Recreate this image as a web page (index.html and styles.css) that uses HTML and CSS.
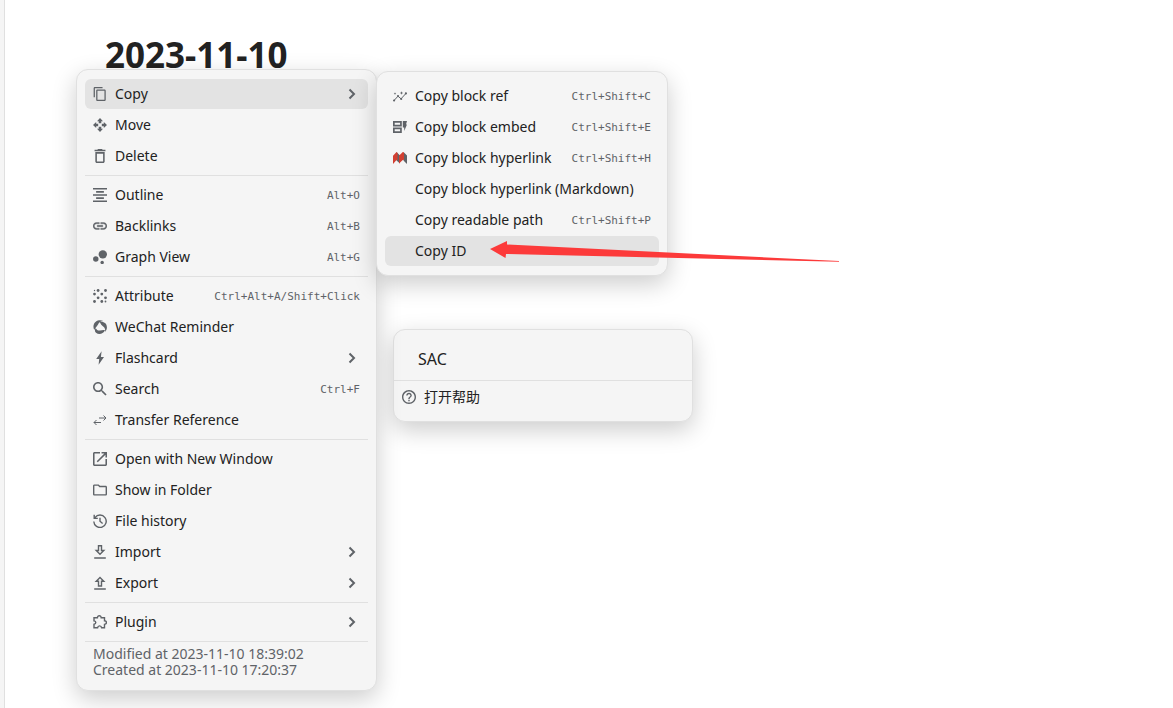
FILE: index.html
```html
<!DOCTYPE html>
<html lang="en">
<head>
<meta charset="utf-8">
<title>2023-11-10</title>
<link rel="stylesheet" href="styles.css">
</head>
<body>
<svg class="defs" aria-hidden="true">
  <symbol id="chevron" viewBox="0 0 16 16"><path d="M5.500 3.500 10 8l-4.500 4.500" fill="none" stroke="currentColor" stroke-width="2"/></symbol>
</svg>
<div class="app">
  <div class="dock"></div>
  <main class="editor"><h1 class="title">2023-11-10</h1></main>
</div>

<section class="menu menu-sac">
  <header class="menu-title">SAC</header>
  <button class="item"><svg class="icon" viewBox="2 2 20 20"><path d="M11 18h2v-2h-2v2zm1-16C6.480 2 2 6.480 2 12s4.480 10 10 10 10-4.480 10-10S17.520 2 12 2zm0 18c-4.410 0-8-3.590-8-8s3.590-8 8-8 8 3.590 8 8-3.590 8-8 8zm0-14c-2.210 0-4 1.790-4 4h2c0-1.100.9-2 2-2s2 .9 2 2c0 2-3 1.750-3 5h2c0-2.250 3-2.500 3-5 0-2.210-1.790-4-4-4z"/></svg><span class="label" lang="zh">打开帮助</span></button>
</section>

<nav class="menu menu-main">
  <button class="item current"><svg class="icon" viewBox="1 1 22 22"><path d="M16 1H4c-1.100 0-2 .9-2 2v14h2V3h12V1zm3 4H8c-1.100 0-2 .9-2 2v14c0 1.100.9 2 2 2h11c1.100 0 2-.9 2-2V7c0-1.100-.9-2-2-2zm0 16H8V7h11v14z"/></svg><span class="label">Copy</span><svg class="chevron"><use href="#chevron"/></svg></button>
  <button class="item"><svg class="icon" viewBox="0 0 14 14"><path d="M7 0l3 3.200H8.300v2H5.700v-2H4zM7 14l-3-3.200h1.700v-2h2.600v2H10zM0 7l3.200-3v1.700h2v2.600h-2V10zM14 7l-3.200 3V8.300h-2V5.700h2V4z"/></svg><span class="label">Move</span></button>
  <button class="item"><svg class="icon" viewBox="3 3 18 18"><path d="M16 9v10H8V9h8m-1.500-6h-5l-1 1H5v2h14V4h-3.500l-1-1zM18 7H6v12c0 1.100.9 2 2 2h8c1.100 0 2-.9 2-2V7z"/></svg><span class="label">Delete</span></button>
  <hr>
  <button class="item"><svg class="icon" viewBox="3 3 18 18"><path d="M7 15v2h10v-2H7zm-4 6h18v-2H3v2zm0-8h18v-2H3v2zm4-6v2h10V7H7zM3 3v2h18V3H3z"/></svg><span class="label">Outline</span><kbd>Alt+O</kbd></button>
  <button class="item"><svg class="icon" viewBox="2 2 20 20"><path stroke="currentColor" stroke-width=".5" d="M3.900 12c0-1.710 1.390-3.100 3.100-3.100h4V7H7c-2.760 0-5 2.240-5 5s2.240 5 5 5h4v-1.900H7c-1.710 0-3.100-1.390-3.100-3.100zM8 13h8v-2H8v2zm9-6h-4v1.900h4c1.710 0 3.100 1.390 3.100 3.100s-1.390 3.100-3.100 3.100h-4V17h4c2.760 0 5-2.240 5-5s-2.240-5-5-5z"/></svg><span class="label">Backlinks</span><kbd>Alt+B</kbd></button>
  <button class="item"><svg class="icon" viewBox="3 3 18 18"><circle cx="6.600" cy="14.600" r="3.500"/><circle cx="14.800" cy="19" r="2.200"/><circle cx="15.600" cy="8.600" r="5.400"/></svg><span class="label">Graph View</span><kbd>Alt+G</kbd></button>
  <hr>
  <button class="item"><svg class="icon" viewBox="0 0 14 14"><circle cx="5.100" cy="1.500" r="1.400"/><circle cx="12.500" cy="1.500" r="1.400"/><circle cx="1.500" cy="5.100" r="1.400"/><circle cx="8.800" cy="5.100" r="1.400"/><circle cx="5.100" cy="8.800" r="1.400"/><circle cx="12.500" cy="8.800" r="1.400"/><circle cx="1.500" cy="12.500" r="1.400"/><circle cx="8.800" cy="12.500" r="1.400"/><circle cx="1.500" cy="1.500" r=".7"/><circle cx="12.500" cy="12.500" r=".9"/></svg><span class="label">Attribute</span><kbd>Ctrl+Alt+A/Shift+Click</kbd></button>
  <button class="item"><svg class="icon" viewBox="0 0 14 14"><path d="M1.200 10C-.9 5.600 1.600.9 6 .3c1.500-.2 2.900 0 4.200.8-2.400.1-4.100 1.300-4.900 3C4.500 5.800 3 7 1.200 10z"/><path d="M6.700 1.800c4.400-.8 7.500 1.900 7.200 6-.1 1.700-.8 3.100-1.800 4.200.3-2.300-.1-4-1.600-5.200-1.600-1.300-3-2.600-3.800-5z"/><path d="M2.700 7.900c.8 1.900 2.300 2.700 4.300 2.500 1.800-.2 3.300-.7 5-.2-1.900 3.800-6 4.900-9 2.600-1.300-1.100-1.500-2.900-.3-4.900z"/></svg><span class="label">WeChat Reminder</span></button>
  <button class="item"><svg class="icon" viewBox="0 0 14 14"><path d="M8.600.3 3.200 8h3L5.600 13.700 11 6H7.900z"/></svg><span class="label">Flashcard</span><svg class="chevron"><use href="#chevron"/></svg></button>
  <button class="item"><svg class="icon" viewBox="3 3 18 18"><path d="M15.500 14h-.79l-.28-.27C15.410 12.590 16 11.110 16 9.500 16 5.910 13.090 3 9.500 3S3 5.910 3 9.500 5.910 16 9.500 16c1.610 0 3.090-.59 4.230-1.570l.27.28v.79l5 4.990L20.490 19l-4.990-5zm-6 0C7.010 14 5 11.990 5 9.500S7.010 5 9.500 5 14 7.010 14 9.500 11.990 14 9.500 14z"/></svg><span class="label">Search</span><kbd>Ctrl+F</kbd></button>
  <button class="item"><svg class="icon thin" viewBox="0 0 14 14"><path d="M6 5h7M10.500 2.500 13 5l-2.500 2.500M8 9.500H1M3.500 7 1 9.500 3.500 12"/></svg><span class="label">Transfer Reference</span></button>
  <hr>
  <button class="item"><svg class="icon" viewBox="3 3 18 18"><path d="M19 19H5V5h7V3H5c-1.110 0-2 .9-2 2v14c0 1.100.89 2 2 2h14c1.100 0 2-.9 2-2v-7h-2v7zM14 3v2h3.590l-9.830 9.830 1.410 1.410L19 6.410V10h2V3h-7z"/></svg><span class="label">Open with New Window</span></button>
  <button class="item"><svg class="icon" viewBox="2 2 20 20"><path d="M9.170 6l2 2H20v10H4V6h5.170M10 4H4c-1.100 0-1.990.9-1.990 2L2 18c0 1.100.9 2 2 2h16c1.100 0 2-.9 2-2V8c0-1.100-.9-2-2-2h-8l-2-2z"/></svg><span class="label">Show in Folder</span></button>
  <button class="item"><svg class="icon line" viewBox="0 0 14 14"><path d="M2 3.600A6.200 6.200 0 1 1 .8 7.500M1.200.8v3.600h3.600M7 3.700v3.600l2.600 2.200"/></svg><span class="label">File history</span></button>
  <button class="item"><svg class="icon line" viewBox="0 0 14 14"><path d="M5.500.8h3v4.700h2.300L7 9.300 3.200 5.500h2.300zM1.200 13h11.600"/></svg><span class="label">Import</span><svg class="chevron"><use href="#chevron"/></svg></button>
  <button class="item"><svg class="icon line" viewBox="0 0 14 14"><path d="M5.500 10h3V5.200h2.300L7 1.400 3.200 5.200h2.300zM1.200 13h11.600"/></svg><span class="label">Export</span><svg class="chevron"><use href="#chevron"/></svg></button>
  <hr>
  <button class="item"><svg class="icon line" viewBox="0 0 14 14"><path d="M1 2.800h3.400c0-2.800 3.800-2.800 3.800 0h3.300v3c2.600.2 2.600 3.400 0 3.600v3.400H8.600c-.3-2.600-3.700-2.600-4 0H1V9.300c2.400-.4 2.400-3 0-3.400z"/></svg><span class="label">Plugin</span><svg class="chevron"><use href="#chevron"/></svg></button>
  <hr>
  <p class="meta">Modified at 2023-11-10 18:39:02<br>Created at 2023-11-10 17:20:37</p>
</nav>

<nav class="menu menu-copy">
  <button class="item"><svg class="icon thin" viewBox="0 0 14 14"><path d="m1 11.500 4-4.300 3 2.600L13 4.400"/><g class="dots"><circle cx="1.100" cy="11.500" r="1.100"/><circle cx="5" cy="7" r="1.100"/><circle cx="8.200" cy="10" r="1.100"/><circle cx="12.900" cy="4.400" r="1.100"/><path d="m8.500 2.300.5 1.200 1.200.5-1.200.5-.5 1.200L8 4.500 6.800 4 8 3.500zM2 3.300l.4.900.9.400-.9.400-.4.900-.4-.9-.9-.4.900-.4z"/></g></svg><span class="label">Copy block ref</span><kbd>Ctrl+Shift+C</kbd></button>
  <button class="item"><svg class="icon" viewBox="0 0 14 14"><path fill-rule="evenodd" d="M0 1h8.800v5.400H0zm1.700 1.700v2h5.400v-2zM0 7.600h8.800V13H0zm1.700 1.700v2h5.400v-2zM9.800 1H14l-1 3.500h1L11.200 11V7.500H9.800z"/></svg><span class="label">Copy block embed</span><kbd>Ctrl+Shift+E</kbd></button>
  <button class="item"><svg class="icon" viewBox="0 0 14 14"><path d="M3.500 1 7 4.500v8L3.500 9.500zM10.500 1 14 4.500V13l-3.500-3.500z"/><path fill="#d23f31" d="M0 4.800 3.500 1 4.600 2v7.200L3.500 9 0 13zM6 4.800 9.800 1l1.200.6v7.200L9.800 9 6 12.500z"/></svg><span class="label">Copy block hyperlink</span><kbd>Ctrl+Shift+H</kbd></button>
  <button class="item"><span class="icon"></span><span class="label">Copy block hyperlink (Markdown)</span></button>
  <button class="item"><span class="icon"></span><span class="label">Copy readable path</span><kbd>Ctrl+Shift+P</kbd></button>
  <button class="item current"><span class="icon"></span><span class="label">Copy ID</span></button>
</nav>

<svg class="arrow" viewBox="0 0 350 22" aria-hidden="true"><path d="M0 9 17 1v3.500L349 21v.8L16 14l-.5 4z"/></svg>
</body>
</html>
```
FILE: styles.css
```css
* { box-sizing: border-box; }

body {
  margin: 0;
  overflow: hidden;
  background: #fff;
  color: #222;
  font-family: "Noto Sans", "Noto Sans CJK SC", sans-serif;
  font-size: 14px;
}

.defs { display: none; }

.app { display: flex; min-height: 100vh; }
.dock { width: 5px; background: #f5f5f5; border-right: 1px solid #e0e0e0; }
.editor { flex: 1; padding: 31px 100px; }
.title { margin: 0; font-size: 35px; line-height: 48px; font-weight: 700; }

.menu {
  position: absolute;
  display: flex;
  flex-direction: column;
  gap: 1px;
  padding: 9px 8px;
  background: #f5f5f5;
  border: 1px solid #e0e0e0;
  border-radius: 12px;
  box-shadow: 0 8px 24px rgba(0, 0, 0, .2);
}
.menu-main { left: 76px; top: 69px; width: 301px; padding-bottom: 12px; }
.menu-copy { left: 376px; top: 71px; width: 292px; }
.menu-sac { left: 393px; top: 329px; width: 300px; padding: 8px 0 9px; }

.item {
  display: flex;
  align-items: center;
  gap: 8px;
  height: 30px;
  padding: 0 8px;
  border: 0;
  border-radius: 6px;
  background: none;
  color: inherit;
  font: inherit;
  text-align: left;
  white-space: nowrap;
}
.item.current { background: #e3e3e3; }
.label { flex: 1; padding-bottom: 2px; }

kbd {
  color: #5f6368;
  font-family: "DejaVu Sans Mono", monospace;
  font-size: 11px;
}

.icon { width: 14px; height: 14px; flex: none; color: #5f6368; fill: currentColor; }
.line, .thin { fill: none; stroke: currentColor; stroke-width: 1.4; }
.thin { stroke-width: 1; }
.dots { fill: currentColor; stroke: none; }
.chevron { width: 16px; height: 16px; color: #5f6368; }

.menu hr {
  width: 100%;
  margin: 3px 0;
  border: 0;
  border-top: 1px solid #e0e0e0;
}

.meta { margin: 0 8px; color: #5f6368; line-height: 16px; }

.menu-title {
  padding: 8px 24px 8px;
  border-bottom: 1px solid #e0e0e0;
  font-size: 16px;
  line-height: 26px;
}

.arrow {
  position: absolute;
  left: 490px;
  top: 240px;
  width: 350px;
  height: 22px;
  fill: #fc3a3a;
}
```
